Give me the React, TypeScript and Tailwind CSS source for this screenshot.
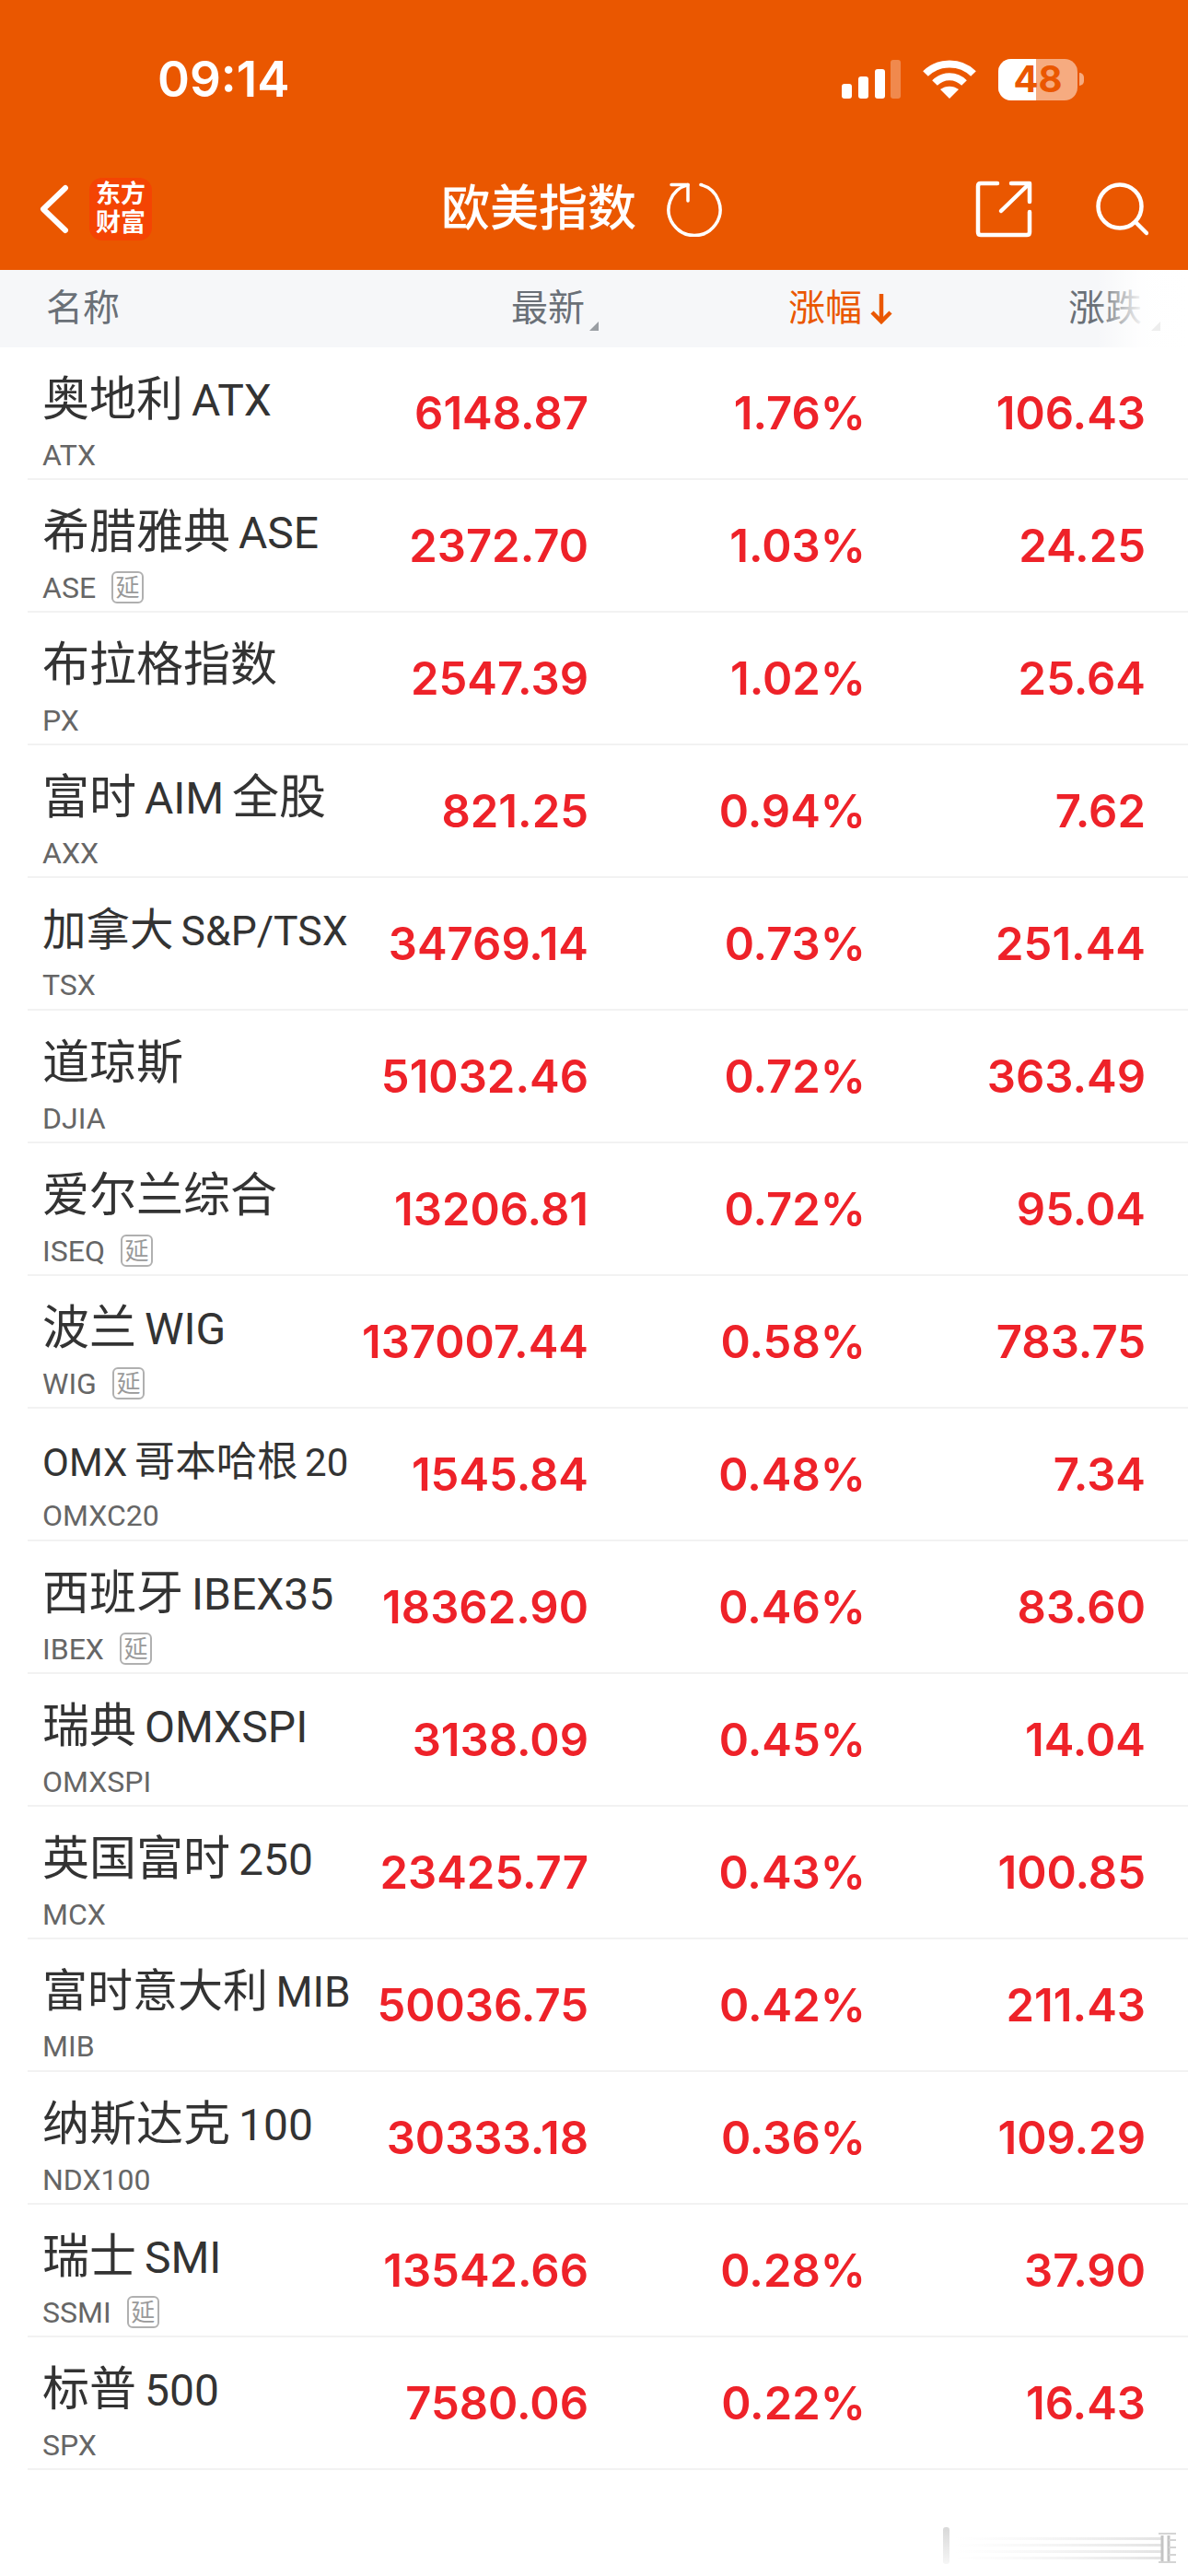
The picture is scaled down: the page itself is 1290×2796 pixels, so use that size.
const rows: [string, string, boolean, string, string, string][] = [
  ["奥地利 ATX", "ATX", false, "6148.87", "1.76%", "106.43"],
  ["希腊雅典 ASE", "ASE", true, "2372.70", "1.03%", "24.25"],
  ["布拉格指数", "PX", false, "2547.39", "1.02%", "25.64"],
  ["富时 AIM 全股", "AXX", false, "821.25", "0.94%", "7.62"],
  ["加拿大 S&P/TSX", "TSX", false, "34769.14", "0.73%", "251.44"],
  ["道琼斯", "DJIA", false, "51032.46", "0.72%", "363.49"],
  ["爱尔兰综合", "ISEQ", true, "13206.81", "0.72%", "95.04"],
  ["波兰 WIG", "WIG", true, "137007.44", "0.58%", "783.75"],
  ["OMX 哥本哈根 20", "OMXC20", false, "1545.84", "0.48%", "7.34"],
  ["西班牙 IBEX35", "IBEX", true, "18362.90", "0.46%", "83.60"],
  ["瑞典 OMXSPI", "OMXSPI", false, "3138.09", "0.45%", "14.04"],
  ["英国富时 250", "MCX", false, "23425.77", "0.43%", "100.85"],
  ["富时意大利 MIB", "MIB", false, "50036.75", "0.42%", "211.43"],
  ["纳斯达克 100", "NDX100", false, "30333.18", "0.36%", "109.29"],
  ["瑞士 SMI", "SSMI", true, "13542.66", "0.28%", "37.90"],
  ["标普 500", "SPX", false, "7580.06", "0.22%", "16.43"],
];

const font = "font-['Roboto','Noto_Sans_CJK_SC',sans-serif]";

// Long names are shrunk to fit the column, as the app does.
const fit: Record<string, [string, string]> = {
  "OMX 哥本哈根 20": ["text-[44.5px]", "text-[42px]"],
  "加拿大 S&P/TSX": ["text-[47.5px]", "text-[44.5px]"],
  "富时意大利 MIB": ["text-[49px]", "text-[46px]"],
};

function Signal() {
  return (
    <svg width="64" height="42" viewBox="0 0 64 42">
      <rect x="0" y="26" width="11" height="16" rx="3" fill="#fff" />
      <rect x="18" y="18" width="11" height="24" rx="3" fill="#fff" />
      <rect x="36" y="10" width="11" height="32" rx="3" fill="#fff" />
      <rect x="53" y="0" width="11" height="42" rx="3" fill="#fff" fillOpacity="0.3" />
    </svg>
  );
}

function Wifi() {
  return (
    <svg width="58" height="43" viewBox="0 0 58 43" fill="none" stroke="#fff" strokeWidth="8">
      <path d="M3 15 C17 1 41 1 55 15" />
      <path d="M13 25 C22 16 36 16 45 25" />
      <path d="M29 42 L19 32 C25 27.5 33 27.5 39 32 Z" fill="#fff" stroke="none" />
    </svg>
  );
}

function Battery() {
  return (
    <div className="flex items-center gap-[2px]">
      <div className="relative h-[45px] w-[86px] rounded-[14px] bg-[#f6ab80]">
        <div className="h-full w-[41px] rounded-l-[14px] bg-white" />
        <span className="absolute inset-0 flex items-center justify-center font-['Inter',sans-serif] text-[40px] font-bold leading-none text-[#ea5700]">48</span>
      </div>
      <div className="h-[14px] w-[5px] rounded-r-full bg-[#f6ab80]" />
    </div>
  );
}

function TagDelay() {
  return (
    <span className="flex h-[35px] w-[35px] items-center justify-center rounded-[6px] border-2 border-[#b0b0b0] text-[26px] leading-none text-[#9a9a9a]">延</span>
  );
}

function Name({ text }: { text: string }) {
  const parts = text.split(/([\u4e00-\u9fff]+)/).filter(Boolean);
  const sizes = fit[text] ?? ["text-[51px]", "text-[48px]"];
  return (
    <span className="whitespace-nowrap leading-[54px] text-[#333333] [word-spacing:-3px]">
      {parts.map((p, i) => (
        <span key={i} className={/[\u4e00-\u9fff]/.test(p) ? sizes[0] : sizes[1]}>{p}</span>
      ))}
    </span>
  );
}

function Value({ v }: { v: string }) {
  return <span className="whitespace-nowrap text-right font-['Inter',sans-serif] text-[49px] font-semibold leading-none text-[#ee2229]">{v}</span>;
}

export default function App() {
  return (
    <div className={`relative h-[2796px] w-[1290px] overflow-hidden bg-white ${font}`}>
      <header className="h-[293px] bg-[#ea5700] text-white">
        <div className="flex h-[172px] items-center justify-between pl-[171px] pr-[113px]">
          <span className="font-['Inter',sans-serif] text-[53px] font-semibold leading-none">09:14</span>
          <div className="flex items-center gap-[24px]">
            <Signal />
            <Wifi />
            <Battery />
          </div>
        </div>
        <div className="relative flex h-[110px] items-center pl-[43px] pr-[43px]">
          <svg width="32" height="54" viewBox="0 0 32 54" fill="none" stroke="#fff" strokeWidth="6" strokeLinecap="round" strokeLinejoin="round">
            <path d="M28 4 L4 27 L28 50" />
          </svg>
          <div className="ml-[22px] flex h-[68px] w-[68px] flex-col items-center justify-center rounded-[14px] bg-[#f44403] text-[27px] font-bold leading-[31px] text-white">
            <span className="whitespace-nowrap">东方</span>
            <span className="whitespace-nowrap">财富</span>
          </div>
          <div className="flex flex-1 items-center justify-start pl-[314px]">
            <span className="text-[53px] font-medium leading-none">欧美指数</span>
            <svg className="ml-[33px]" width="60" height="60" viewBox="0 0 60 60" fill="none" stroke="#fff" strokeWidth="3.5" strokeLinecap="round" strokeLinejoin="round">
              <path d="M37 3.5 A28 28 0 1 1 23 3.5" />
              <path d="M5 3.5 H23 V21" />
            </svg>
          </div>
          <svg className="mr-[68px]" width="62" height="62" viewBox="0 0 62 62" fill="none" stroke="#fff" strokeWidth="4.5" strokeLinecap="round" strokeLinejoin="round">
            <path d="M24 3 H6 Q3 3 3 6 V56 Q3 59 6 59 H56 Q59 59 59 56 V34" />
            <path d="M28 33 L58 4" />
            <path d="M39 3 H59 V23" />
          </svg>
          <svg width="58" height="58" viewBox="0 0 58 58" fill="none" stroke="#fff" strokeWidth="4.5" strokeLinecap="round">
            <circle cx="27" cy="26" r="23.5" />
            <path d="M44 43 L56 55" />
          </svg>
        </div>
      </header>

      <div className="relative flex h-[84px] items-center bg-[#f6f7f9] pl-[50px] text-[40px] leading-none text-[#6a7077]">
        <span>名称</span>
        <span className="absolute left-[555px] top-[22px]">最新</span>
        <svg className="absolute left-[640px] top-[56px]" width="10" height="10" viewBox="0 0 10 10"><path d="M10 0 V10 H0 Z" fill="#9a9ea3" /></svg>
        <span className="absolute left-[856px] top-[22px] text-[#ea5700]">涨幅</span>
        <svg className="absolute left-[945px] top-[25px]" width="24" height="34" viewBox="0 0 24 34" fill="none" stroke="#ea5700" strokeWidth="4.5">
          <path d="M12 1 V31" />
          <path d="M2 21 L12 31 L22 21" />
        </svg>
        <span className="absolute left-[1160px] top-[22px]">涨跌</span>
        <div className="absolute inset-y-0 right-0 w-[100px] bg-gradient-to-r from-[#ffffff00] via-[#ffffffee] to-white" />
        <svg className="absolute left-[1250px] top-[56px]" width="10" height="10" viewBox="0 0 10 10"><path d="M10 0 V10 H0 Z" fill="#ededed" /></svg>
      </div>

      <div>
        {rows.map(([name, code, delay, last, pct, chg]) => (
          <div key={code} className="ml-[30px] grid h-[144px] grid-cols-[340px_253px_301px_304px] items-center border-b-2 border-[#f2f2f2] pl-[16px]">
            <div className="flex flex-col pt-[22px]">
              <Name text={name} />
              <div className="mt-[3px] flex h-[36px] items-center gap-[17px]">
                <span className="text-[32px] leading-[36px] text-[#666666]">{code}</span>
                {delay && <TagDelay />}
              </div>
            </div>
            <Value v={last} />
            <Value v={pct} />
            <Value v={chg} />
          </div>
        ))}
      </div>

      <svg className="absolute left-[980px] top-[2740px]" width="300" height="48" viewBox="0 0 300 48" fill="none">
        <defs>
          <linearGradient id="streak" x1="0" y1="0" x2="1" y2="0">
            <stop offset="0" stopColor="#e4e4e4" stopOpacity="0" />
            <stop offset="1" stopColor="#cccccc" stopOpacity="0.55" />
          </linearGradient>
          <linearGradient id="stem" x1="0" y1="0" x2="0" y2="1">
            <stop offset="0" stopColor="#d8d8d8" />
            <stop offset="1" stopColor="#f6f6f6" />
          </linearGradient>
        </defs>
        <rect x="44" y="3" width="7" height="40" rx="3" fill="url(#stem)" />
        <rect x="56" y="14" width="225" height="3" fill="url(#streak)" />
        <rect x="56" y="21" width="225" height="3" fill="url(#streak)" />
        <rect x="56" y="28" width="225" height="3" fill="url(#streak)" />
        <rect x="56" y="35" width="225" height="3" fill="url(#streak)" />
        <path d="M278 10 H297 M278 41 H297" stroke="#d4d4d4" strokeWidth="2" />
        <path d="M282 12 V40 M289 12 V40" stroke="#c4c4c4" strokeWidth="3" />
        <path d="M289 17 H297 M289 25 H297 M289 33 H297" stroke="#d4d4d4" strokeWidth="2" />
      </svg>
    </div>
  );
}
